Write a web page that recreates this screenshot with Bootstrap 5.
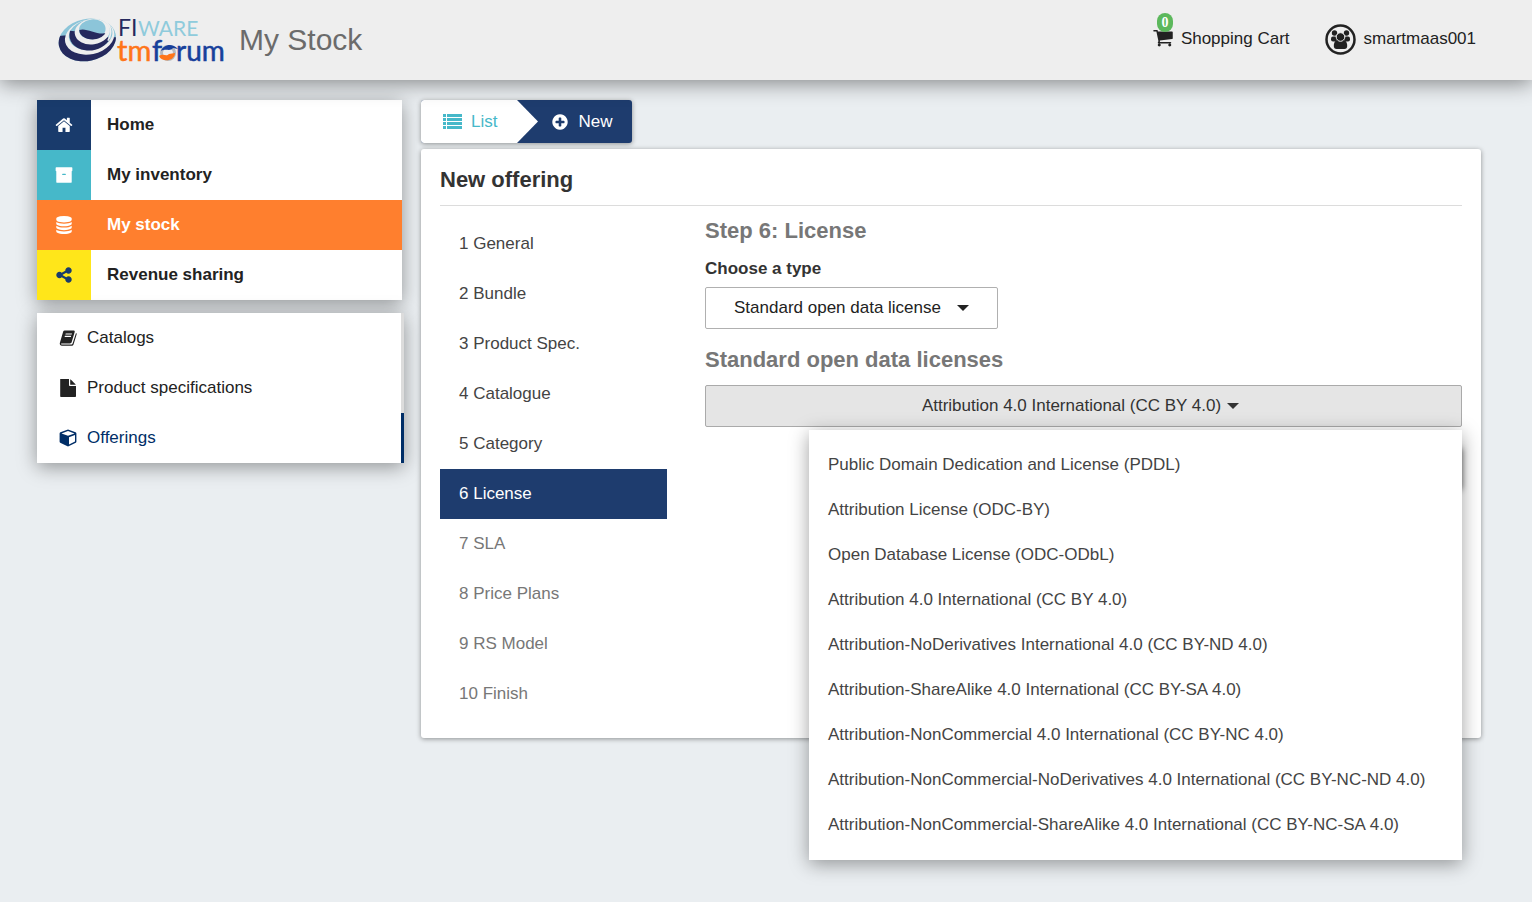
<!DOCTYPE html>
<html lang="en">
<head>
<meta charset="utf-8">
<meta name="viewport" content="width=device-width, initial-scale=1">
<title>My Stock</title>
<link href="https://cdn.jsdelivr.net/npm/bootstrap@5.3.0/dist/css/bootstrap.min.css" rel="stylesheet">
<style>
:root{--navy:#1e3c6e;--teal:#46b8c9;--ink:#222}
body{font-family:"Liberation Sans",Arial,sans-serif;font-size:17px;line-height:24px;color:#333;background:#eaeef1;min-height:100vh}
a{color:inherit;text-decoration:none}
svg{display:block;flex:none}
.ico{width:18px;height:18px;fill:currentColor}
.topbar{height:80px;background:#eee;box-shadow:0 3px 20px rgba(0,0,0,.45);padding:0 56px 2px 58px;color:var(--ink)}
.page-title{font-size:30px;line-height:36px;color:#6b6b6b;font-weight:400;margin:2px auto 0 11px}
.topbar-links{gap:35px}
.cart-icon{width:22px;height:21px;margin:0 7px 4px 0}
.cart-count{position:absolute;left:5px;top:-14px;background:#5cb85c;color:#fff;font:bold 14px/19px "Liberation Serif",serif;width:16px;height:19px;border-radius:8px;text-align:center}
.page{padding:20px 51px 0 37px;gap:19px}
.sidebar{width:365px;flex:none}
.content{min-width:0}
.raised{background:#fff;box-shadow:0 4px 18px rgba(0,0,0,.38)}
.main-nav a{height:50px;font-weight:700;color:var(--ink)}
.main-nav .tile{width:54px;height:50px;color:#fff;margin-right:16px}
.main-nav .active{background:#ff7f2e;color:#fff}
.tile-home{background:#193b6c}.tile-inv{background:var(--teal)}.main-nav .tile-rev{background:#ffe61a;color:#193b6c}
.sub-nav{margin-top:13px;margin-right:-2px}
.sub-nav a{height:50px;padding-left:22px;gap:10px;color:var(--ink);border-right:3px solid #dcdcdc}
.sub-nav .active{color:#002e67;border-color:#002e67}
.soft{box-shadow:0 1px 5px rgba(0,0,0,.4);border-radius:3px}
.crumbs{height:43px;background:var(--navy);overflow:hidden}
.crumbs a{height:43px}
.crumb-list{background:#fff;color:var(--teal);padding:0 20px 0 22px;gap:9px}
.crumb-new{color:#fff;padding:0 20px 0 13px;gap:9px}
.panel{background:#fff;margin-top:6px;padding:0 19px 19px}
.panel h2{font-size:22px;line-height:26px;font-weight:700;padding:18px 0 12px;border-bottom:1px solid #dcdcdc;margin:0}
.wizard{--bs-gutter-x:38px}
.steps{margin-top:13px}
.steps a{height:50px;padding-left:19px;color:#444}
.steps .todo{color:#777}
.steps .active{background:var(--navy);color:#fff}
.panel h3{font-size:22px;line-height:26px;font-weight:700;color:#777;margin:0}
.type-label{margin:13px 0 6px}
.panel .sub-head{margin:18px 0 12px}
.pick{height:42px;border:1px solid #b0b0b0;border-radius:2px;font-size:17px;line-height:24px;color:var(--ink);background:#fff;padding:0}
.pick::after{content:"";border:6px solid transparent;border-top-color:currentColor;border-bottom:0}
.pick-type{width:293px;gap:16px}
.pick-license,.pick-license:hover,.pick-license.show{background:#e5e5e5;border-color:#aaa;color:#333;gap:6px;padding-right:6px}
.license-menu{position:absolute;right:0;top:45px;width:653px;max-width:100%;padding:12px 0 13px;z-index:5;margin:0}
.license-menu a{display:flex;align-items:center;height:45px;padding-left:19px;color:#444;white-space:nowrap}
.next{width:90px;height:42px;margin-top:19px;border:0;border-radius:3px;background:var(--navy);box-shadow:0 2px 6px rgba(0,0,0,.6)}
</style>
</head>
<body>
<header class="topbar d-flex align-items-center position-relative">
  <a href="#" aria-label="FIWARE TM Forum">
    <svg width="170" height="58" viewBox="0 0 170 58">
      <defs><clipPath id="lower"><path d="M0 55 28 60 120 72 188 98 240 110V200H0z"/></clipPath></defs>
      <g transform="scale(.333) translate(-24 0)">
        <ellipse cx="112" cy="90" rx="87" ry="63" transform="rotate(-12 112 90)" fill="#8cc5d9"/>
        <ellipse cx="112" cy="90" rx="87" ry="63" transform="rotate(-12 112 90)" fill="#25295d" clip-path="url(#lower)"/>
        <ellipse cx="119" cy="81" rx="75" ry="52" transform="rotate(-12 119 81)" fill="#eee"/>
        <ellipse cx="122" cy="74" rx="66" ry="46" transform="rotate(-10 122 74)" fill="#8cc5d9"/>
        <path d="M60 62c-8 30 12 54 46 59 32 4 62-12 74-35l-14-10-50-8z" fill="#25295d"/>
        <ellipse cx="127" cy="65" rx="53" ry="38" transform="rotate(-8 127 65)" fill="#eee"/>
        <ellipse cx="127" cy="58" rx="40" ry="30" transform="rotate(-6 127 58)" fill="#8cc5d9"/>
        <path d="M88 60c20-8 48 14 78 10-10 16-34 22-54 16-16-5-24-15-24-26z" fill="#25295d"/>
        <path d="M152 26c30 12 38 38 22 66" fill="none" stroke="#eee" stroke-width="5"/>
      </g>
      <g font-family="Lato,sans-serif" font-size="23"><text x="60" y="26" fill="#25295d">FI</text><text x="80" y="26" fill="#8fcbdc" font-size="21">WARE</text></g>
      <g font-family="Lato,sans-serif" font-size="29" stroke-width=".5"><text x="59" y="51" fill="#ff7519" stroke="#ff7519">tm</text><text x="94" y="51" fill="#17409b" stroke="#17409b">f</text><text x="118" y="51" fill="#17409b" stroke="#17409b" font-size="28">rum</text></g>
      <circle cx="110" cy="43" r="6.500" fill="#eee" stroke="#b5b8bd" stroke-width="3"/>
      <path d="M103 41c2-6 11-9 17-2l-5-1c-3 4-7 0-12 3z" fill="#17409b"/>
      <path d="M101 46c5-3 7 1 10-2l6-1c0 8-13 10-16 3z" fill="#ff7519"/>
    </svg>
  </a>
  <h1 class="page-title">My Stock</h1>
  <nav class="topbar-links d-flex align-items-center">
  <a href="#" class="d-flex align-items-center position-relative">
    <svg class="cart-icon" viewBox="0 0 1792 1792" fill="currentColor"><path d="M704 1536q0 52-38 90t-90 38-90-38-38-90 38-90 90-38 90 38 38 90zm896 0q0 52-38 90t-90 38-90-38-38-90 38-90 90-38 90 38 38 90zm128-1088v512q0 24-16.500 42.500t-40.500 21.500l-1044 122q13 60 13 70 0 16-24 64h920q26 0 45 19t19 45-19 45-45 19h-1024q-26 0-45-19t-19-45q0-11 8-31.500t16-36 21.500-40 15.500-29.500l-177-823h-204q-26 0-45-19t-19-45 19-45 45-19h256q16 0 28.500 6.500t19.500 15.500 13 24.500 8 26 5.500 29.500 4.500 26h1201q26 0 45 19t19 45z"/></svg>
    <span class="cart-count">0</span>Shopping Cart</a>
  <a href="#" class="d-flex align-items-center gap-2">
    <svg width="31" height="31" viewBox="0 0 31 31" fill="#222"><circle cx="15.500" cy="15.500" r="14" fill="none" stroke="#222" stroke-width="2.500"/><circle cx="9.500" cy="9" r="2.700"/><circle cx="21.500" cy="9" r="2.700"/><rect x="6" y="12.500" width="6" height="5" rx="2"/><rect x="19" y="12.500" width="6" height="5" rx="2"/><path d="M8.800 22c0-4 2-6 4-6h5.400c2 0 4 2 4 6 0 2-1 3-2.700 3h-8c-1.700 0-2.700-1-2.700-3z"/><circle cx="15.500" cy="13" r="4.300" stroke="#eee"/></svg>
    smartmaas001</a>
  </nav>
</header>

<div class="page d-flex align-items-start">
  <aside class="sidebar">
    <nav class="main-nav raised">
      <a href="#" class="d-flex align-items-center"><span class="tile tile-home d-flex align-items-center justify-content-center"><svg class="ico" viewBox="96 110 1600 1600"><path d="M1408 992v480q0 26-19 45t-45 19h-320v-384h-256v384h-320q-26 0-45-19t-19-45v-480l512-424 512 424zm223-69l-62 74q-8 9-21 11h-3q-13 0-21-7l-628-524-628 524q-12 8-24 7-13-2-21-11l-62-74q-8-10-7-23.500t11-21.500l655-546q32-26 76-26t76 26l180 150v-175q0-14 9-23t23-9h192q14 0 23 9t9 23v408l219 182q10 8 11 21.500t-7 23.500z"/></svg></span>Home</a>
      <a href="#" class="d-flex align-items-center"><span class="tile tile-inv d-flex align-items-center justify-content-center"><svg class="ico" viewBox="0 0 1792 1792"><path d="M1088 832q0-26-19-45t-45-19h-256q-26 0-45 19t-19 45 19 45 45 19h256q26 0 45-19t19-45zm576-256v1024q0 26-19 45t-45 19h-1408q-26 0-45-19t-19-45v-1024q0-26 19-45t45-19h1408q26 0 45 19t19 45zm64-384v256q0 26-19 45t-45 19h-1536q-26 0-45-19t-19-45v-256q0-26 19-45t45-19h1536q26 0 45 19t19 45z"/></svg></span>My inventory</a>
      <a href="#" class="active d-flex align-items-center"><span class="tile d-flex align-items-center justify-content-center"><svg class="ico" viewBox="0 0 1792 1792"><path d="M896 768q237 0 443-43t325-127v170q0 69-103 128t-280 93.500-385 34.500-385-34.500-280-93.500-103-128v-170q119 84 325 127t443 43zm0 768q237 0 443-43t325-127v170q0 69-103 128t-280 93.500-385 34.500-385-34.500-280-93.500-103-128v-170q119 84 325 127t443 43zm0-384q237 0 443-43t325-127v170q0 69-103 128t-280 93.500-385 34.500-385-34.500-280-93.500-103-128v-170q119 84 325 127t443 43zm0-1152q208 0 385 34.500t280 93.500 103 128v128q0 69-103 128t-280 93.500-385 34.500-385-34.500-280-93.500-103-128v-128q0-69 103-128t280-93.500 385-34.500z"/></svg></span>My stock</a>
      <a href="#" class="d-flex align-items-center"><span class="tile tile-rev d-flex align-items-center justify-content-center"><svg class="ico" viewBox="0 0 1792 1792"><path d="M1344 1024q133 0 226.500 93.500t93.500 226.500-93.500 226.500-226.500 93.500-226.500-93.500-93.500-226.500q0-12 2-34l-360-180q-92 86-218 86-133 0-226.500-93.500t-93.500-226.500 93.500-226.500 226.500-93.500q126 0 218 86l360-180q-2-22-2-34 0-133 93.500-226.500t226.500-93.500 226.500 93.500 93.500 226.500-93.500 226.500-226.500 93.500q-126 0-218-86l-360 180q2 22 2 34t-2 34l360 180q92-86 218-86z"/></svg></span>Revenue sharing</a>
    </nav>
    <nav class="sub-nav raised">
      <a href="#" class="d-flex align-items-center"><svg class="ico" viewBox="0 0 18 18"><path fill-rule="evenodd" d="M5.500 1.500h9c1 0 1.500.6 1.200 1.600l-3 10c-.3 1-.8 1.400-1.700 1.400H2.500c-.8 0-.6 1 .2 1H12c1 0 1.400-.3 1.700-1.200L17 4c.7.400.8.900.6 1.500l-3 9.700c-.4 1.100-1.100 1.600-2.200 1.600H3c-1.700 0-2.700-1.500-2.100-3l3-10.300c.3-1.300.7-2 1.600-2zM6.700 4.400 6.400 5.500h6.300l.3-1.100zm-.8 2.400-.3 1.100h6.300l.3-1.100z"/></svg>Catalogs</a>
      <a href="#" class="d-flex align-items-center"><svg class="ico" viewBox="0 0 18 18"><path d="M1.200 0H10v6c0 .6.400 1 1 1h6v10c0 .6-.4 1-1 1H2.200c-.6 0-1-.4-1-1zM11.200.2c.5.100 5.100 4.700 5.600 5.600h-5.600z"/></svg>Product specifications</a>
      <a href="#" class="active d-flex align-items-center"><svg class="ico" viewBox="0 0 18 18"><path fill-rule="evenodd" d="M9 .6 16.600 3.300c.5.200.8.600.8 1.100v8.400c0 .4-.2.800-.6 1L9 17.600 1.200 13.800c-.4-.2-.6-.6-.6-1V4.400c0-.5.300-.9.800-1.100zM9 2 2.500 4.400 9 6.800l6.500-2.400zM10 15.500l6-3V6l-6 2.200z"/></svg>Offerings</a>
    </nav>
  </aside>

  <main class="content flex-grow-1">
    <nav class="crumbs soft d-inline-flex align-top">
      <a href="#" class="crumb-list d-flex align-items-center"><svg width="19" height="15" viewBox="0 0 19 15" fill="currentColor"><path d="M0 0h3v3H0zM4 0h15v3H4zM0 4h3v3H0zM4 4h15v3H4zM0 8h3v3H0zM4 8h15v3H4zM0 12h3v3H0zM4 12h15v3H4z"/></svg>List</a>
      <svg width="21" height="43" viewBox="0 0 21 43"><path d="M0 0 21 21.500 0 43z" fill="#fff"/></svg>
      <a href="#" class="crumb-new d-flex align-items-center"><svg class="ico" viewBox="0 0 1792 1792"><path d="M1344 960v-128q0-26-19-45t-45-19h-256v-256q0-26-19-45t-45-19h-128q-26 0-45 19t-19 45v256h-256q-26 0-45 19t-19 45v128q0 26 19 45t45 19h256v256q0 26 19 45t45 19h128q26 0 45-19t19-45v-256h256q26 0 45-19t19-45zm320-64q0 209-103 385.500t-279.500 279.500-385.500 103-385.500-103-279.500-279.500-103-385.500 103-385.500 279.500-279.500 385.500-103 385.500 103 279.500 279.500 103 385.500z"/></svg>New</a>
    </nav>
    <section class="panel soft">
      <h2>New offering</h2>
      <div class="row wizard">
        <div class="col-3">
          <nav class="steps">
            <a href="#" class="d-flex align-items-center">1 General</a>
            <a href="#" class="d-flex align-items-center">2 Bundle</a>
            <a href="#" class="d-flex align-items-center">3 Product Spec.</a>
            <a href="#" class="d-flex align-items-center">4 Catalogue</a>
            <a href="#" class="d-flex align-items-center">5 Category</a>
            <a href="#" class="active d-flex align-items-center">6 License</a>
            <a href="#" class="todo d-flex align-items-center">7 SLA</a>
            <a href="#" class="todo d-flex align-items-center">8 Price Plans</a>
            <a href="#" class="todo d-flex align-items-center">9 RS Model</a>
            <a href="#" class="todo d-flex align-items-center">10 Finish</a>
          </nav>
        </div>
        <div class="col-9">
          <h3 class="mt-2 pt-1">Step 6: License</h3>
          <label for="license-type" class="type-label d-block fw-bold">Choose a type</label>
          <button id="license-type" type="button" class="pick pick-type btn d-flex align-items-center justify-content-center">Standard open data license</button>
          <h3 class="sub-head">Standard open data licenses</h3>
          <div class="position-relative">
            <button type="button" aria-expanded="true" class="pick pick-license btn w-100 d-flex align-items-center justify-content-center">Attribution 4.0 International (CC BY 4.0)</button>
            <ul class="license-menu raised list-unstyled">
              <li><a href="#">Public Domain Dedication and License (PDDL)</a></li>
              <li><a href="#">Attribution License (ODC-BY)</a></li>
              <li><a href="#">Open Database License (ODC-ODbL)</a></li>
              <li><a href="#">Attribution 4.0 International (CC BY 4.0)</a></li>
              <li><a href="#">Attribution-NoDerivatives International 4.0 (CC BY-ND 4.0)</a></li>
              <li><a href="#">Attribution-ShareAlike 4.0 International (CC BY-SA 4.0)</a></li>
              <li><a href="#">Attribution-NonCommercial 4.0 International (CC BY-NC 4.0)</a></li>
              <li><a href="#">Attribution-NonCommercial-NoDerivatives 4.0 International (CC BY-NC-ND 4.0)</a></li>
              <li><a href="#">Attribution-NonCommercial-ShareAlike 4.0 International (CC BY-NC-SA 4.0)</a></li>
            </ul>
          </div>
          <button type="button" class="next d-block ms-auto" aria-label="Next"></button>
        </div>
      </div>
    </section>
  </main>
</div>
<script src="https://cdn.jsdelivr.net/npm/bootstrap@5.3.0/dist/js/bootstrap.bundle.min.js"></script>
</body>
</html>
